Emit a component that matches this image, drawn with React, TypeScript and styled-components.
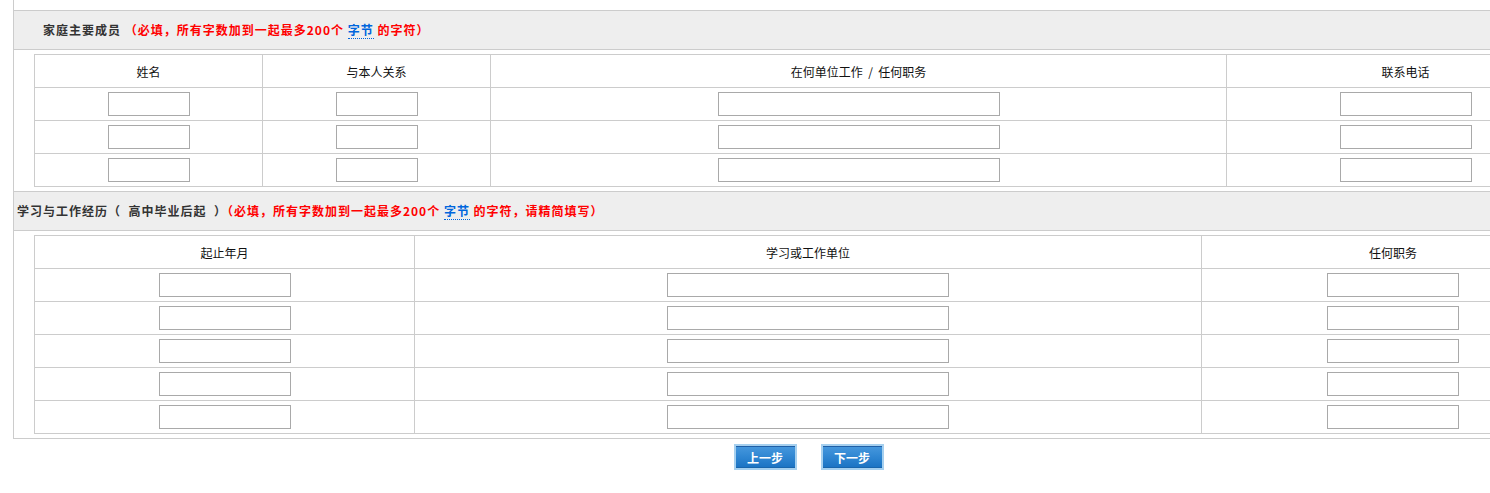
import { createGlobalStyle } from "styled-components";
import styled from "styled-components";

const GlobalStyle = createGlobalStyle`
  html, body {
    margin: 0;
    padding: 0;
    overflow: hidden;
    background: #fff;
  }
  body {
    font-family: "Noto Sans CJK SC", "Liberation Sans", sans-serif;
    font-size: 12px;
    color: #333;
  }
`;

const Page = styled.div`
  width: 1620px;
  padding-left: 13px;
`;

const Panel = styled.div`
  width: 1591px;
  border-left: 1px solid #cccccc;
  border-bottom: 1px solid #cccccc;
  padding-top: 10px;
`;

const Section = styled.div`
  display: flex;
  flex-direction: column;
`;

const SectionHeader = styled.div<{ $indent: number }>`
  height: 38px;
  line-height: 38px;
  padding-left: ${(p) => p.$indent}px;
  background: #eeeeee;
  border-top: 1px solid #cccccc;
  border-bottom: 1px solid #cccccc;
  font-weight: bold;
  letter-spacing: 1px;
  color: #333;
  white-space: pre;
`;

const Required = styled.span`
  color: #ff0000;
`;

const ByteLink = styled.a`
  color: #0066dd;
  text-decoration: none;
  border-bottom: 1px dotted #0066dd;
  cursor: help;
`;

const TableWrap = styled.div`
  padding: 4px 20px;
`;

const FormTable = styled.table`
  width: 1550px;
  table-layout: fixed;
  border-collapse: collapse;
  border: 1px solid #cccccc;

  th,
  td {
    border: 1px solid #cccccc;
    height: 32px;
    padding: 0;
    text-align: center;
    vertical-align: middle;
  }

  th {
    font-weight: normal;
    color: #111;
    white-space: pre;
  }
`;

const TextInput = styled.input<{ $w: number }>`
  display: block;
  margin: 0 auto;
  width: ${(p) => p.$w}px;
  height: 24px;
  box-sizing: border-box;
  border: 1px solid #a9a9a9;
  padding: 0 3px;
  font-size: 12px;
  background: #fff;
  outline: none;
`;

const ButtonBar = styled.div`
  width: 1591px;
  display: flex;
  justify-content: center;
  gap: 24px;
  padding-top: 5px;
`;

const StepButton = styled.button`
  width: 63px;
  height: 26px;
  box-sizing: border-box;
  border: 2px solid #a6d0ef;
  background: linear-gradient(#4798dd 0%, #2f86d2 50%, #1a72c2 100%);
  box-shadow: inset 0 1px 0 #1f5fa6, inset 0 -1px 0 #1866ad;
  color: #fff;
  font-family: "Noto Sans CJK SC", sans-serif;
  font-size: 12px;
  font-weight: bold;
  padding: 0;
  cursor: pointer;
`;

type Col = { title: string; width: number; input: number };

const familyCols: Col[] = [
  { title: "姓名", width: 228, input: 82 },
  { title: "与本人关系", width: 228, input: 82 },
  { title: "在何单位工作  /  任何职务", width: 736, input: 282 },
  { title: "联系电话", width: 358, input: 132 },
];

const historyCols: Col[] = [
  { title: "起止年月", width: 380, input: 132 },
  { title: "学习或工作单位", width: 787, input: 282 },
  { title: "任何职务", width: 383, input: 132 },
];

function InputTable({ cols, rows }: { cols: Col[]; rows: number }) {
  return (
    <TableWrap>
      <FormTable>
        <colgroup>
          {cols.map((c) => (
            <col key={c.title} style={{ width: c.width }} />
          ))}
        </colgroup>
        <thead>
          <tr>
            {cols.map((c) => (
              <th key={c.title}>{c.title}</th>
            ))}
          </tr>
        </thead>
        <tbody>
          {Array.from({ length: rows }).map((_, r) => (
            <tr key={r}>
              {cols.map((c) => (
                <td key={c.title}>
                  <TextInput type="text" $w={c.input} />
                </td>
              ))}
            </tr>
          ))}
        </tbody>
      </FormTable>
    </TableWrap>
  );
}

export default function App() {
  return (
    <Page>
      <GlobalStyle />
      <Panel>
        <Section>
          <SectionHeader $indent={29}>
            家庭主要成员{" "}
            <Required>
              （必填，所有字数加到一起最多200个 <ByteLink title="一个汉字为两个字节">字节</ByteLink> 的字符）
            </Required>
          </SectionHeader>
          <InputTable cols={familyCols} rows={3} />
        </Section>
        <Section>
          <SectionHeader $indent={3}>
            学习与工作经历（  高中毕业后起  ）
            <Required>
              （必填，所有字数加到一起最多200个 <ByteLink title="一个汉字为两个字节">字节</ByteLink> 的字符，请精简填写）
            </Required>
          </SectionHeader>
          <InputTable cols={historyCols} rows={5} />
        </Section>
      </Panel>
      <ButtonBar>
        <StepButton type="button">上一步</StepButton>
        <StepButton type="button">下一步</StepButton>
      </ButtonBar>
    </Page>
  );
}
